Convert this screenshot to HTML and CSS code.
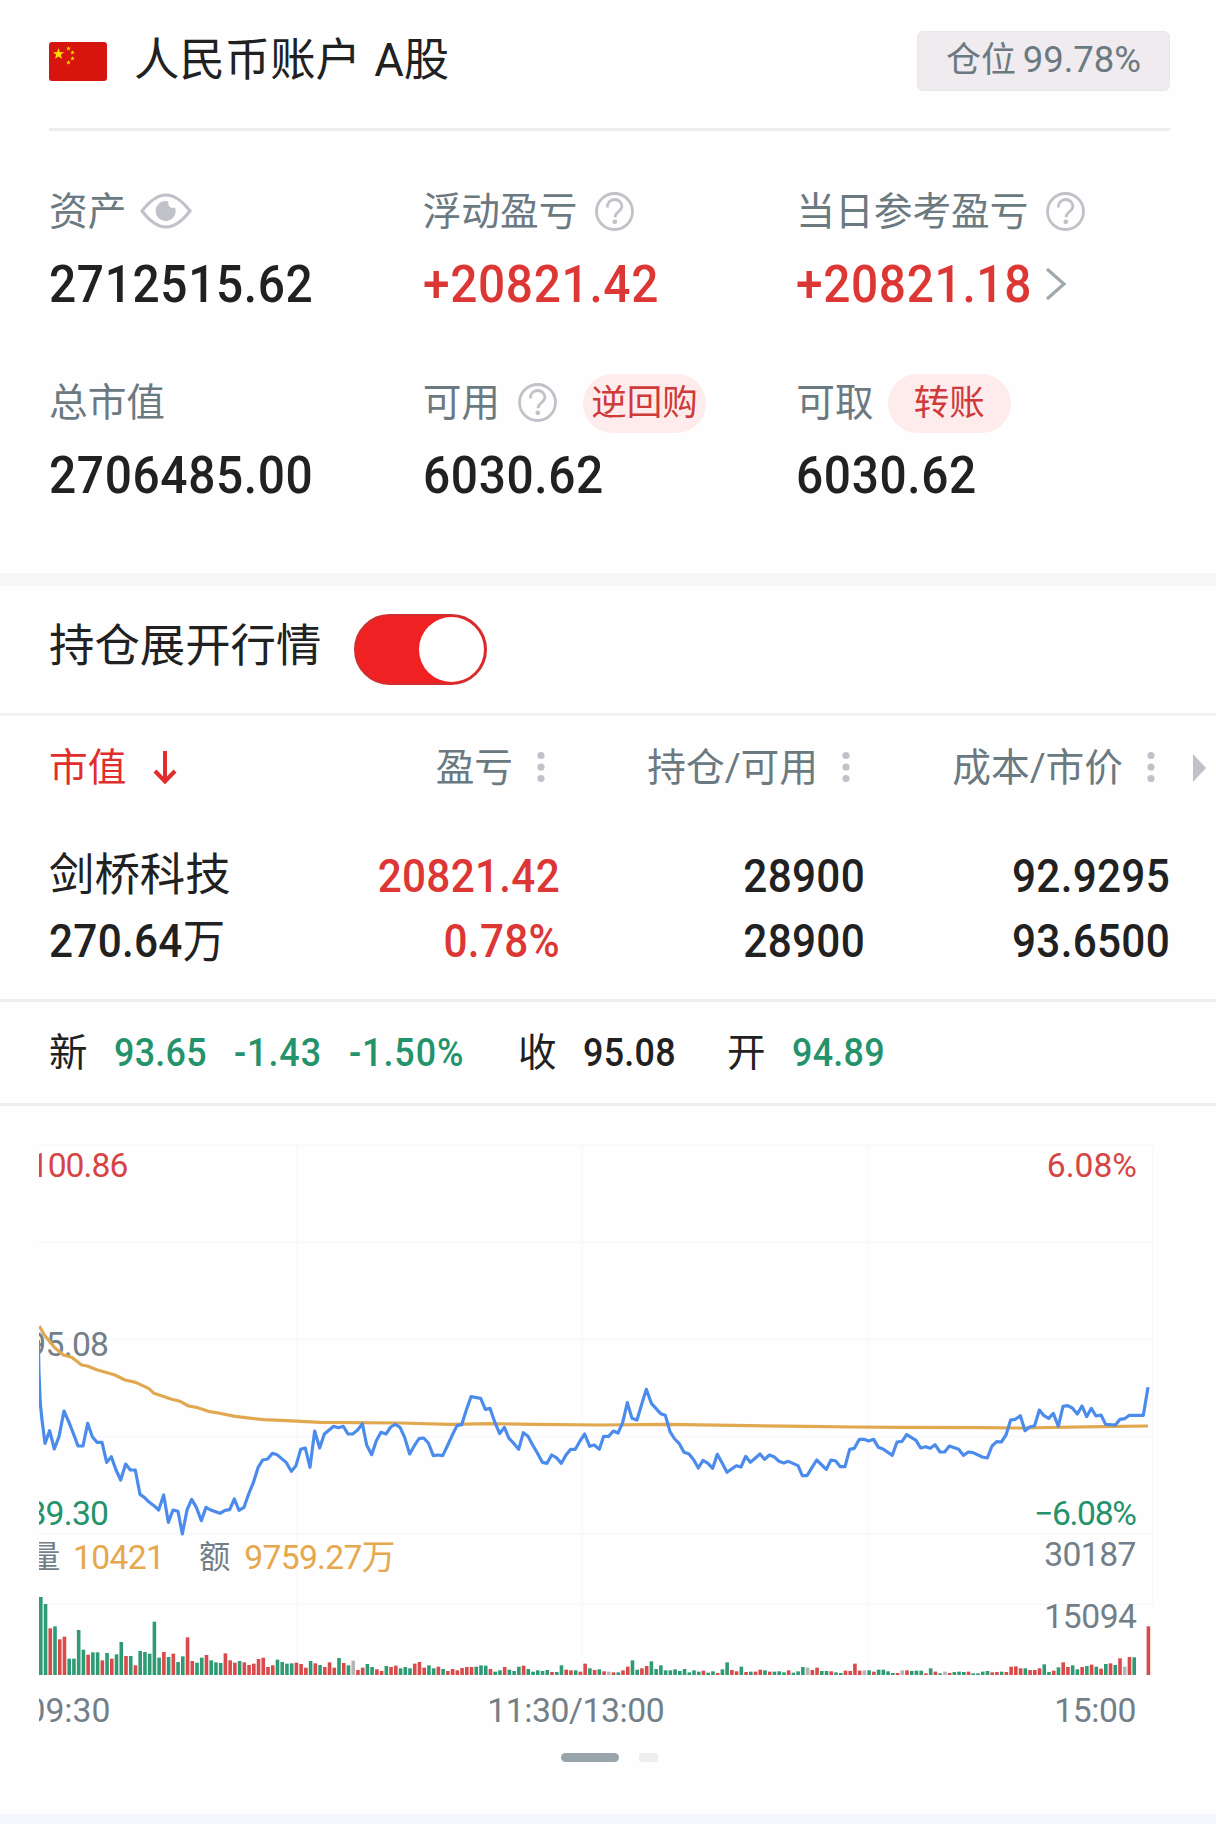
FILE: index.html
```html
<!DOCTYPE html>
<html lang="zh-CN">
<head>
  <meta charset="UTF-8">
  <meta name="viewport" content="width=device-width, initial-scale=1.0">
  <title>持仓</title>
  <link rel="stylesheet" href="styles.css">
</head>
<body>
  <svg class="defs" width="0" height="0">
    <symbol id="help" viewBox="0 0 39 39">
      <circle cx="19.5" cy="19.5" r="18" fill="none" stroke="#c1c1ca" stroke-width="2.8"/>
      <path d="M12.3 15.5c0-5 3.200-8 7.300-8s7.300 2.900 7.300 6.700c0 5.200-6.800 5.400-6.800 11" fill="none" stroke="#c1c1ca" stroke-width="2.800"/>
      <circle cx="19.800" cy="29.800" r="2.400" fill="#c1c1ca"/>
    </symbol>
    <symbol id="dots" viewBox="0 0 8 32">
      <circle cx="4" cy="4.500" r="3.600" fill="#c1c1ca"/>
      <circle cx="4" cy="16" r="3.600" fill="#c1c1ca"/>
      <circle cx="4" cy="27.500" r="3.600" fill="#c1c1ca"/>
    </symbol>
    <symbol id="star" viewBox="-1 -1 2 2">
      <path d="M0-1L.235-.309H.951L.38.124L.588.809L0 .4L-.588.809L-.38.124L-.951-.309H-.235Z" fill="#ffde00"/>
    </symbol>
  </svg>

  <section class="account">
    <header class="account-head">
      <svg class="flag" viewBox="0 0 58 39">
        <rect width="58" height="39" rx="3" fill="#d7150f"/>
        <use href="#star" x="3.500" y="6" width="12" height="12"/>
        <use href="#star" x="17" y="4" width="5" height="5"/>
        <use href="#star" x="21" y="8" width="5" height="5"/>
        <use href="#star" x="21" y="14" width="5" height="5"/>
        <use href="#star" x="17" y="18" width="5" height="5"/>
      </svg>
      <h1>人民币账户 A股</h1>
      <div class="badge">仓位 <span class="badge-num">99.78%</span></div>
    </header>

    <div class="stats">
      <div class="stat">
        <div class="stat-label"><span>资产</span>
          <svg class="eye" viewBox="0 0 52 36">
            <path d="M2 18C12 5 19 2 26 2s14 3 24 16C40 31 33 34 26 34S12 31 2 18Z" fill="none" stroke="#c1c1ca" stroke-width="3.200"/>
            <path d="M26 8a10 10 0 1 0 9 6.500a4.800 4.800 0 0 1-6.500-6A10 10 0 0 0 26 8Z" fill="#c1c1ca"/>
          </svg>
        </div>
        <div class="stat-value"><span>2712515.62</span></div>
      </div>
      <div class="stat">
        <div class="stat-label"><span>浮动盈亏</span><svg class="help"><use href="#help"/></svg></div>
        <div class="stat-value up"><span>+20821.42</span></div>
      </div>
      <div class="stat">
        <div class="stat-label"><span>当日参考盈亏</span><svg class="help"><use href="#help"/></svg></div>
        <div class="stat-value up"><span>+20821.18</span>
          <svg class="chevron" viewBox="0 0 22 34"><path d="M2 2L19 17L2 32" fill="none" stroke="#9ea8ae" stroke-width="3.200"/></svg>
        </div>
      </div>
      <div class="stat">
        <div class="stat-label"><span>总市值</span></div>
        <div class="stat-value"><span>2706485.00</span></div>
      </div>
      <div class="stat">
        <div class="stat-label"><span>可用</span><svg class="help"><use href="#help"/></svg><div class="pill pill-repo">逆回购</div></div>
        <div class="stat-value"><span>6030.62</span></div>
      </div>
      <div class="stat">
        <div class="stat-label"><span>可取</span><div class="pill">转账</div></div>
        <div class="stat-value"><span>6030.62</span></div>
      </div>
    </div>
  </section>

  <section class="toggle-row">
    <h2>持仓展开行情</h2>
    <div class="switch"><div class="knob"></div></div>
  </section>

  <section class="holdings">
    <div class="grid grid-head">
      <div class="sorted"><span>市值</span>
        <svg class="arrow" viewBox="0 0 24 34"><path d="M12 1V31M2 21L12 31.500L22 21" fill="none" stroke="#e12d2d" stroke-width="4"/></svg>
      </div>
      <div class="col"><span>盈亏</span><svg class="dots"><use href="#dots"/></svg></div>
      <div class="col"><span>持仓/可用</span><svg class="dots"><use href="#dots"/></svg></div>
      <div class="col"><span>成本/市价</span><svg class="dots"><use href="#dots"/></svg></div>
      <div class="more"></div>
    </div>
    <div class="grid grid-row">
      <div class="name">剑桥科技</div>
      <div class="num up">20821.42</div>
      <div class="num">28900</div>
      <div class="num">92.9295</div>
      <div class="num first">270.64<span class="unit">万</span></div>
      <div class="num up">0.78%</div>
      <div class="num">28900</div>
      <div class="num">93.6500</div>
    </div>
  </section>

  <section class="quote">
    <div class="quote-label">新</div>
    <div class="quote-num down">93.65</div>
    <div class="quote-num change down">-1.43</div>
    <div class="quote-num change down">-1.50%</div>
    <div class="quote-label">收</div>
    <div class="quote-num">95.08</div>
    <div class="quote-label">开</div>
    <div class="quote-num down">94.89</div>
  </section>

  <section class="chart">
    <!-- drawn at 3 units per pixel -->
    <svg class="chart-svg" viewBox="117 0 3345 1860">
      <path class="gridline" d="M117 106H3458M117 397H3458M117 688H3458M117 980H3458M117 1272H3458M117 1483H3458M892 106V1695M1746 106V1695M2603 106V1695M3458 106V1483"/>
      <g class="axis">
        <text class="t-up" x="385" y="201" textLength="296">100.86</text>
        <text x="327" y="738" textLength="245">95.08</text>
        <text class="t-down" x="327" y="1245" textLength="245">89.30</text>
        <text class="t-up" x="3411" y="201">6.08%</text>
        <text class="t-down" x="3411" y="1245" textLength="309">−6.08%</text>
        <text x="3409" y="1367" textLength="276">30187</text>
        <text x="3411" y="1553" textLength="278">15094</text>
        <text x="331" y="1836">09:30</text>
        <text x="1994" y="1836" textLength="532">11:30/13:00</text>
        <text x="3409" y="1836" textLength="246">15:00</text>
        <text class="cjk" x="181" y="1375">量</text>
        <text class="t-avg" x="495" y="1378" textLength="276">10421</text>
        <text class="cjk" x="691" y="1375">额</text>
        <text class="t-avg" x="1186" y="1378" textLength="453">9759.27万</text>
      </g>
      <polyline class="line-avg" points="118,648 133,675 163,712 190,735 215,742 245,765 262,768 290,779 345,795 375,810 407,817 447,836 462,850 515,868 540,874 566,888 593,893 625,904 655,909 705,919 790,929 860,932 960,937 1200,939 1350,943 1470,941 1600,943 1800,945 2000,943 2250,947 2420,949 2560,951 2700,952 2950,953 3060,954 3300,950 3444,948"/>
      <polyline class="line-price" points="115,690 117,790 121,880 126,930 135,1000 149,962 163,1017 177,980 192,903 206,935 220,970 234,1008 249,1008 263,940 277,980 291,997 306,997 320,1057 334,1040 348,1080 362,1110 377,1062 391,1080 406,1080 420,1153 433,1162 448,1177 462,1187 476,1200 491,1155 505,1237 519,1200 534,1204 547,1272 561,1200 575,1168 589,1192 604,1232 618,1192 632,1200 660,1210 675,1201 689,1199 703,1167 717,1201 732,1192 746,1152 760,1118 774,1073 788,1050 803,1047 817,1030 831,1034 859,1058 874,1084 888,1067 902,1018 916,1014 930,1072 944,963 959,1014 973,972 1001,949 1015,953 1030,949 1044,972 1058,972 1073,960 1087,941 1100,1005 1115,1034 1129,992 1143,967 1158,972 1172,951 1186,943 1200,952
        1214,982 1229,1032 1243,1007 1257,986 1271,984 1285,999 1300,1037 1314,1035 1328,1037 1342,1008 1357,975 1371,947 1385,944 1399,900 1413,860 1442,865 1456,898 1470,895 1485,938 1499,971 1513,952 1527,985 1542,1001 1556,1018 1570,968 1584,979 1598,1005 1612,1029 1627,1057 1641,1060 1655,1035 1669,1043 1684,1060 1698,1035 1712,1018 1726,1018 1740,993 1754,972 1769,1009 1783,1005 1798,1018 1811,979 1826,979 1840,963 1854,969 1868,938 1882,878 1896,925 1911,930 1925,883 1939,838 1954,880 1982,911 1996,916 2010,965 2024,987 2038,1001 2052,1027 2067,1032 2081,1049 2095,1074 2109,1051 2124,1060 2138,1075 2152,1033 2166,1058 2181,1087 2209,1067 2223,1071 2237,1039 2251,1057 2280,1032 2294,1048 2308,1035 2322,1040 2337,1054 2351,1059 2365,1054 2394,1067 2407,1097
        2421,1097 2450,1050 2479,1078 2493,1050 2507,1053 2521,1070 2535,1070 2549,1018 2563,1015 2578,988 2592,988 2606,993 2621,988 2635,1012 2649,1017 2677,1036 2691,996 2706,994 2720,974 2748,991 2762,1014 2777,1010 2791,1015 2805,1004 2820,1026 2834,1026 2848,1008 2876,1018 2890,1036 2905,1026 2919,1028 2947,1041 2962,1044 2976,1008 2990,995 3004,996 3018,975 3032,930 3046,928 3061,917 3075,962 3089,951 3104,947 3118,900 3132,917 3146,925 3160,910 3175,949 3189,889 3203,887 3217,894 3232,912 3246,888 3260,920 3274,895 3288,918 3303,915 3317,943 3346,945 3360,928 3374,926 3388,916 3430,916 3444,832"/>
      <g id="volume"></g>
    </svg>

    <div class="pager">
      <span class="page-on"></span>
      <span class="page-off"></span>
    </div>
  </section>

  <footer></footer>

  <script>
    // g = 跌, r = 涨, n = 平
    const volumes = `
      g234 g213 r140 g146 r107 r115 g49 g49 g135 g76 r61 g68 g68 r44 g66 r49 g62 g99 r57 g57
      r29 g72 g69 g64 g160 g52 r69 g54 r64 g39 g56 r113 r42 g37 g52 r60 g44 g38 g36 r65
      r44 r37 g42 r38 r30 r34 r48 r52 r24 r29 g46 g39 g34 g35 r37 r33 r22 g42 r35 g30
      r24 r38 r22 g51 r36 g29 n43 r15 r22 g33 g24 r17 r12 g27 r24 r28 g20 g24 g20 r34
      r39 r22 g29 g20 r25 g18 r12 r18 r14 r21 r24 r24 g25 g29 g28 r18 g10 g14 r24 g16
      g12 g25 r28 g18 g10 g14 g12 g15 r9 g9 g29 r16 r14 g14 r10 r34 g20 r15 g17 r11
      n10 r8 g8 r14 r25 g44 g16 r20 r27 g41 g18 g29 g14 g14 g17 g12 g18 g8 g14 g10
      r13 g7 g11 r6 g17 g38 r15 r11 g25 r9 g10 r10 r16 g14 r10 g10 g11 g8 r14 g7
      g11 g24 n22 r15 r22 g12 g12 r11 g8 g6 r13 r12 r34 r13 n14 g14 r10 g16 g16 g11
      g6 r6 n14 r14 g12 g13 g13 r5 g20 r10 g5 n10 r6 g9 g10 g9 r10 g5 g5 g10
      g12 r8 r9 g10 r9 r25 r26 r20 g20 r15 r15 r20 g32 g9 r13 g23 r38 r24 g29 g17
      r24 g27 r31 g25 r19 g33 r35 g30 r50 n25 r54 g53 n0 n0 r146`.trim().split(/\s+/);

    const group = document.getElementById('volume');
    volumes.forEach(function(item, i) {
      const height = Number(item.slice(1));
      const bar = document.createElementNS('http://www.w3.org/2000/svg', 'rect');
      bar.setAttribute('class', 'bar-' + item[0]);
      bar.setAttribute('x', (122 + i * 14.2 - 5).toFixed(1));
      bar.setAttribute('y', 1695 - height);
      bar.setAttribute('width', 10.8);
      bar.setAttribute('height', height);
      group.appendChild(bar);
    });
  </script>
</body>
</html>
```

FILE: styles.css
```css
* {
  box-sizing: border-box;
}

body {
  margin: 0;
  background-color: #fefefe;
  color: #212121;
  font-family: Roboto, 'Noto Sans CJK SC', sans-serif;
}

h1,
h2 {
  margin: 0;
  font-size: 45.4px;
  font-weight: 400;
  line-height: 60px;
  white-space: nowrap;
}

.defs {
  display: block;
}

.up {
  color: #dc3734;
}

.down {
  color: #24926a;
}

/* account */
.account {
  height: 586px;
  padding: 0 46px 0 49px;
  border-bottom: 13px solid #f6f6f6;
}

.account-head {
  display: flex;
  align-items: center;
  height: 131px;
  padding-bottom: 6px;
  border-bottom: 3px solid #ededed;
}

.flag {
  width: 58px;
  height: 39px;
  margin-right: 27px;
}

.account-head h1 {
  word-spacing: 2px;
}

.badge {
  width: 253px;
  height: 60px;
  margin-left: auto;
  border: 1px solid #e9e5e9;
  border-radius: 6px;
  background-color: #efebef;
  color: #6b7981;
  font-size: 35px;
  line-height: 56px;
  text-align: center;
  white-space: nowrap;
}

.badge-num {
  font-size: 36.5px;
  margin-left: -2px;
}

.stats {
  display: grid;
  grid-template-columns: repeat(3, 1fr);
  grid-auto-rows: 191px;
  padding-top: 50px;
}

.stat-label {
  display: flex;
  align-items: center;
  height: 60px;
  color: #6b7981;
  font-size: 38.7px;
  white-space: nowrap;
}

.stat-label span,
.sorted span,
.col span {
  padding-bottom: 6px;
}

.stat-value {
  display: flex;
  align-items: center;
  height: 60px;
  margin-top: 13px;
  font-size: 52px;
  font-weight: 500;
  letter-spacing: 0.7px;
}

/* condensed digits */
.stat-value span {
  transform: scaleX(0.92);
  transform-origin: left;
}

.eye {
  width: 52px;
  height: 36px;
  margin-left: 14px;
}

.help {
  width: 39px;
  height: 39px;
  margin-left: 18px;
}

.chevron {
  width: 22px;
  height: 34px;
  margin-left: -8px;
}

.pill {
  width: 123px;
  height: 59px;
  margin: 2px 0 0 14px;
  border-radius: 30px;
  background-color: #feecec;
  color: #cf3a3a;
  font-size: 35.5px;
  line-height: 59px;
  text-align: center;
}

.pill-repo {
  margin-left: 26px;
}

/* switch */
.toggle-row {
  display: flex;
  align-items: center;
  gap: 34px;
  height: 130px;
  padding-left: 49px;
  border-bottom: 3px solid #f5f1f3;
}

.toggle-row h2 {
  width: 271px;
  padding-bottom: 5px;
}

.switch {
  width: 133px;
  height: 71px;
  padding: 1px;
  border: 2px solid #cf2f31;
  border-radius: 36px;
  background-color: #ef2123;
}

.knob {
  width: 65px;
  height: 65px;
  margin-left: auto;
  border-radius: 50%;
  background-color: #fff;
}

/* holdings */
.holdings {
  height: 286px;
  border-bottom: 3px solid #ededed;
}

.grid {
  display: grid;
  grid-template-columns: 1fr 305px 305px 305px;
  padding: 0 46px 0 49px;
}

.grid-head {
  position: relative;
  height: 102px;
  color: #6b7981;
  font-size: 38.7px;
}

.sorted,
.col {
  display: flex;
  align-items: center;
}

.sorted {
  color: #e12d2d;
}

.arrow {
  width: 24px;
  height: 34px;
  margin-left: 27px;
}

.col {
  justify-content: flex-end;
  padding-right: 15px;
}

.dots {
  width: 8px;
  height: 32px;
  margin-left: 24px;
}

.more {
  position: absolute;
  right: 10px;
  top: 38px;
  border-left: 13px solid #c1c1ca;
  border-top: 14px solid transparent;
  border-bottom: 14px solid transparent;
}

.grid-row {
  grid-auto-rows: 65px;
  padding-top: 26px;
  line-height: 65px;
}

.name {
  font-size: 45.4px;
  line-height: 64px;
  white-space: nowrap;
}

.num {
  font-size: 46px;
  font-weight: 500;
  letter-spacing: 0.3px;
  text-align: right;
  transform: scaleX(0.92);
  transform-origin: right;
}

.first {
  text-align: left;
  white-space: nowrap;
  transform-origin: left;
}

.unit {
  font-weight: 400;
}

/* quote */
.quote {
  display: grid;
  grid-template-columns: 65px 120px 115px 169px 65px 144px 65px 1fr;
  align-items: center;
  height: 104px;
  padding-left: 49px;
  border-bottom: 3px solid #ededed;
}

.quote-label {
  padding-bottom: 7px;
  font-size: 38.5px;
}

.quote-num {
  font-size: 39px;
  font-weight: 500;
  letter-spacing: 0.3px;
  transform: scaleX(0.92);
  transform-origin: left;
}

.change {
  letter-spacing: 1px;
}

/* chart */
.chart {
  height: 708px;
  padding: 4px 0 0 39px;
}

.chart-svg {
  display: block;
  width: 1115px;
  height: 620px;
}

.gridline {
  fill: none;
  stroke: #f8f8fc;
  stroke-width: 4;
}

.axis {
  fill: #737f88;
  font-size: 101px;
  text-anchor: end;
}

.axis .cjk {
  font-size: 94px;
}

.axis .t-up {
  fill: #d64545;
}

.axis .t-down {
  fill: #24926a;
}

.axis .t-avg {
  fill: #e5a84c;
}

.line-avg,
.line-price {
  fill: none;
  stroke-width: 9.5;
  stroke-linejoin: round;
}

.line-avg {
  stroke: #e2a850;
}

.line-price {
  stroke: #4a8bec;
}

.bar-g {
  fill: #2f9b74;
}

.bar-r {
  fill: #d94a4a;
}

.bar-n {
  fill: #b5b5b5;
}

.pager {
  display: flex;
  gap: 20px;
  padding: 23px 0 0 522px;
}

.page-on {
  width: 58px;
  height: 9px;
  border-radius: 5px;
  background-color: #9aa5ab;
}

.page-off {
  width: 19px;
  height: 9px;
  border-radius: 2px;
  background-color: #eee;
}

footer {
  height: 10px;
  background-color: #f6f7fe;
}
```
